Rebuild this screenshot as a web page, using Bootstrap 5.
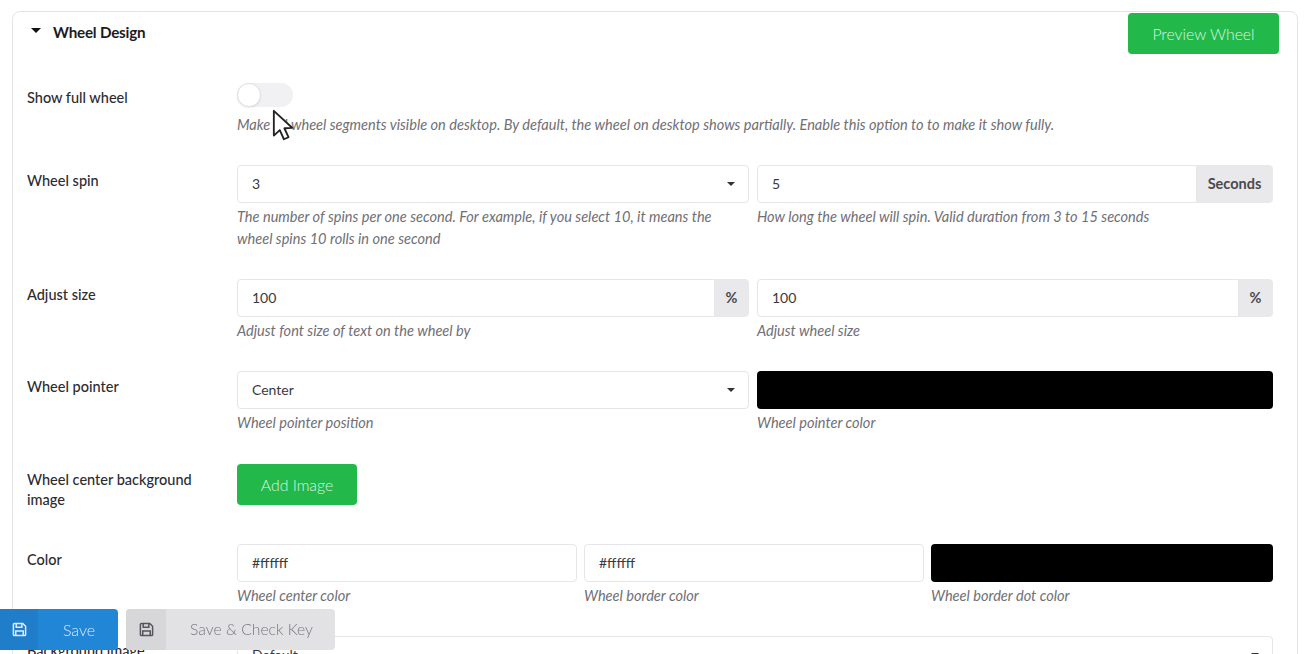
<!DOCTYPE html>
<html lang="en"><head><meta charset="utf-8"><title>Wheel Design</title>
<link rel="stylesheet" href="https://cdn.jsdelivr.net/npm/bootstrap@5.3.0/dist/css/bootstrap.min.css">
<style>
html,body{height:654px;overflow:hidden;background:#fff}
body{font-family:Lato,"Liberation Sans",sans-serif;font-size:14.5px;color:#212529}
.panel{margin:11px 13px 0 12px;border:1px solid #e4e4e6;border-radius:8px;height:720px;padding:0 24px 0 14px}
.panel-head{height:70px;position:relative}
.panel-title{font-size:15.2px;font-weight:700;color:#1b1b1f;padding-left:4px;margin-top:9px;letter-spacing:-.2px}
.caret-ico{width:10px;height:5px;margin-right:12px;margin-bottom:3px}
.btn-wheel{background:#22b94a;color:#d9f5e1;border:0;border-radius:4px;font-size:15.8px;font-weight:300;height:41px;padding-left:0;padding-right:0}
.btn-preview{width:151px;position:absolute;top:1px;right:-6px}
.btn-add{width:120px}
.field-row{display:flex}
.field-label{width:210px;flex:none;font-weight:500;color:#2b2b30;line-height:20px;padding-right:30px}
.field-body{flex:1;min-width:0}
.part-l{flex:0 0 512px;min-width:0}
.part-r{flex:0 0 516px;min-width:0}
.part-a{flex:0 0 340px;min-width:0}
.part-b{flex:0 0 340px;min-width:0}
.part-c{flex:0 0 342px;min-width:0}
.help-text{font-style:italic;color:#6f6f76;font-size:14.57px;line-height:22px;margin-top:3px}
.form-control,.form-select{height:38px;font-size:14px;border-color:#e6e6e8;border-radius:4px;color:#3a3a40;padding:5px 14px 7px}
.form-select{background-image:none}
.sel-wrap{position:relative}
.sel-caret{position:absolute;right:14px;top:17px;width:8px;height:4px;pointer-events:none}
.input-group-text{background:#e9e8ea;border-color:#e9e8ea;color:#4a4a50;font-size:14.5px;border-radius:0 4px 4px 0;font-weight:700;height:38px}
.addon-s{width:77px;justify-content:center}
.addon-p{width:35px;justify-content:center}
.swatch{height:38px;background:#000;border-radius:4px}
.switch-track{width:56px;height:24px;border-radius:12px;background:#f1f0f2;position:relative}
.switch-knob{position:absolute;left:0;top:0;width:24px;height:24px;border-radius:50%;background:#fff;border:1px solid #dfdfe2;box-shadow:0 1px 2px rgba(0,0,0,.08)}
.r1{margin-top:1px;height:82px}
.r1 .field-label{margin-top:5px}
.r1 .help-text{margin-top:7px}
.r2{height:114px}
.r2 .field-label{margin-top:6px}
.r3{height:92px}
.r3 .field-label{margin-top:6px}
.r4{height:93px}
.r4 .field-label{margin-top:6px}
.r5{height:80px}
.r5 .field-label{margin-top:6px}
.r6{height:92px}
.r6 .field-label{margin-top:6px}
.r7 .field-label{margin-top:5px}
.save-bar{position:fixed;left:0;top:609px;display:flex;gap:8px}
.save-btn{height:41px;border:0;border-radius:0 4px 4px 0;display:flex;padding:0;font-size:16px;font-weight:300;overflow:hidden;align-items:stretch}
.save-btn .ico-cell{width:38px;display:flex;align-items:center;justify-content:center}
.save-btn .lbl-cell{flex:1;display:flex;align-items:center;justify-content:center;padding-left:2px}
.save-main{width:118px;background:#2286d6;color:#d8ecfb}
.save-main .ico-cell{background:#1f7dc9}
.save-alt{width:209px;background:#e2e2e5;color:#77777d;border-radius:4px;font-size:15.7px}
.save-alt .ico-cell{width:40px;background:#d7d7da}
.pointer-ico{position:fixed;left:272px;top:109px;width:22px;height:33px}
</style></head>
<body>
<div class="panel">
  <div class="panel-head d-flex align-items-start">
    <div class="panel-title d-flex align-items-center"><svg class="caret-ico" viewBox="0 0 10 5"><path d="M0 0h10L5 5z" fill="#111"/></svg>Wheel Design</div>
    <button type="button" class="btn btn-wheel btn-preview">Preview Wheel</button>
  </div>
  <div class="field-row r1">
    <div class="field-label">Show full wheel</div>
    <div class="field-body">
      <div class="switch-track"><span class="switch-knob"></span></div>
      <div class="help-text">Make all wheel segments visible on desktop. By default, the wheel on desktop shows partially. Enable this option to to make it show fully.</div>
    </div>
  </div>
  <div class="field-row r2">
    <div class="field-label">Wheel spin</div>
    <div class="field-body d-flex gap-2">
      <div class="part-l">
        <div class="sel-wrap"><select class="form-select"><option>3</option></select><svg class="sel-caret" viewBox="0 0 10 5"><path d="M0 0h10L5 5z" fill="#333"/></svg></div>
        <div class="help-text">The number of spins per one second. For example, if you select 10, it means the wheel spins 10 rolls in one second</div>
      </div>
      <div class="part-r">
        <div class="input-group"><input class="form-control" value="5"><span class="input-group-text addon-s">Seconds</span></div>
        <div class="help-text">How long the wheel will spin. Valid duration from 3 to 15 seconds</div>
      </div>
    </div>
  </div>
  <div class="field-row r3">
    <div class="field-label">Adjust size</div>
    <div class="field-body d-flex gap-2">
      <div class="part-l">
        <div class="input-group"><input class="form-control" value="100"><span class="input-group-text addon-p">%</span></div>
        <div class="help-text">Adjust font size of text on the wheel by</div>
      </div>
      <div class="part-r">
        <div class="input-group"><input class="form-control" value="100"><span class="input-group-text addon-p">%</span></div>
        <div class="help-text">Adjust wheel size</div>
      </div>
    </div>
  </div>
  <div class="field-row r4">
    <div class="field-label">Wheel pointer</div>
    <div class="field-body d-flex gap-2">
      <div class="part-l">
        <div class="sel-wrap"><select class="form-select"><option>Center</option></select><svg class="sel-caret" viewBox="0 0 10 5"><path d="M0 0h10L5 5z" fill="#333"/></svg></div>
        <div class="help-text">Wheel pointer position</div>
      </div>
      <div class="part-r">
        <div class="swatch"></div>
        <div class="help-text">Wheel pointer color</div>
      </div>
    </div>
  </div>
  <div class="field-row r5">
    <div class="field-label">Wheel center background image</div>
    <div class="field-body"><button type="button" class="btn btn-wheel btn-add">Add Image</button></div>
  </div>
  <div class="field-row r6">
    <div class="field-label">Color</div>
    <div class="field-body d-flex justify-content-between">
      <div class="part-a"><input class="form-control" value="#ffffff"><div class="help-text">Wheel center color</div></div>
      <div class="part-b"><input class="form-control" value="#ffffff"><div class="help-text">Wheel border color</div></div>
      <div class="part-c"><div class="swatch"></div><div class="help-text">Wheel border dot color</div></div>
    </div>
  </div>
  <div class="field-row r7">
    <div class="field-label">Background image</div>
    <div class="field-body"><div class="sel-wrap"><select class="form-select"><option>Default</option></select><svg class="sel-caret" viewBox="0 0 10 5"><path d="M0 0h10L5 5z" fill="#333"/></svg></div></div>
  </div>
</div>
<div class="save-bar">
  <button type="button" class="save-btn save-main"><span class="ico-cell"><svg width="15" height="15" viewBox="0 0 16 16" fill="none" stroke="#d8ecfb" stroke-width="1.6"><path d="M1.500 2.500a1 1 0 0 1 1-1h9l3 3v9a1 1 0 0 1-1 1h-11a1 1 0 0 1-1-1z"/><path d="M4.500 1.500v4h6v-4M4 14.500v-5h8v5"/></svg></span><span class="lbl-cell">Save</span></button>
  <button type="button" class="save-btn save-alt"><span class="ico-cell"><svg width="15" height="15" viewBox="0 0 16 16" fill="none" stroke="#55555b" stroke-width="1.6"><path d="M1.500 2.500a1 1 0 0 1 1-1h9l3 3v9a1 1 0 0 1-1 1h-11a1 1 0 0 1-1-1z"/><path d="M4.500 1.500v4h6v-4M4 14.500v-5h8v5"/></svg></span><span class="lbl-cell">Save &amp; Check Key</span></button>
</div>
<svg class="pointer-ico" viewBox="0 0 24 36"><path d="M2 2v27l6.500-6 4.500 10 5-2.200-4.500-9.800 8.500-.5z" fill="#fff" stroke="#222" stroke-width="2" stroke-linejoin="round"/></svg>
</body></html>
